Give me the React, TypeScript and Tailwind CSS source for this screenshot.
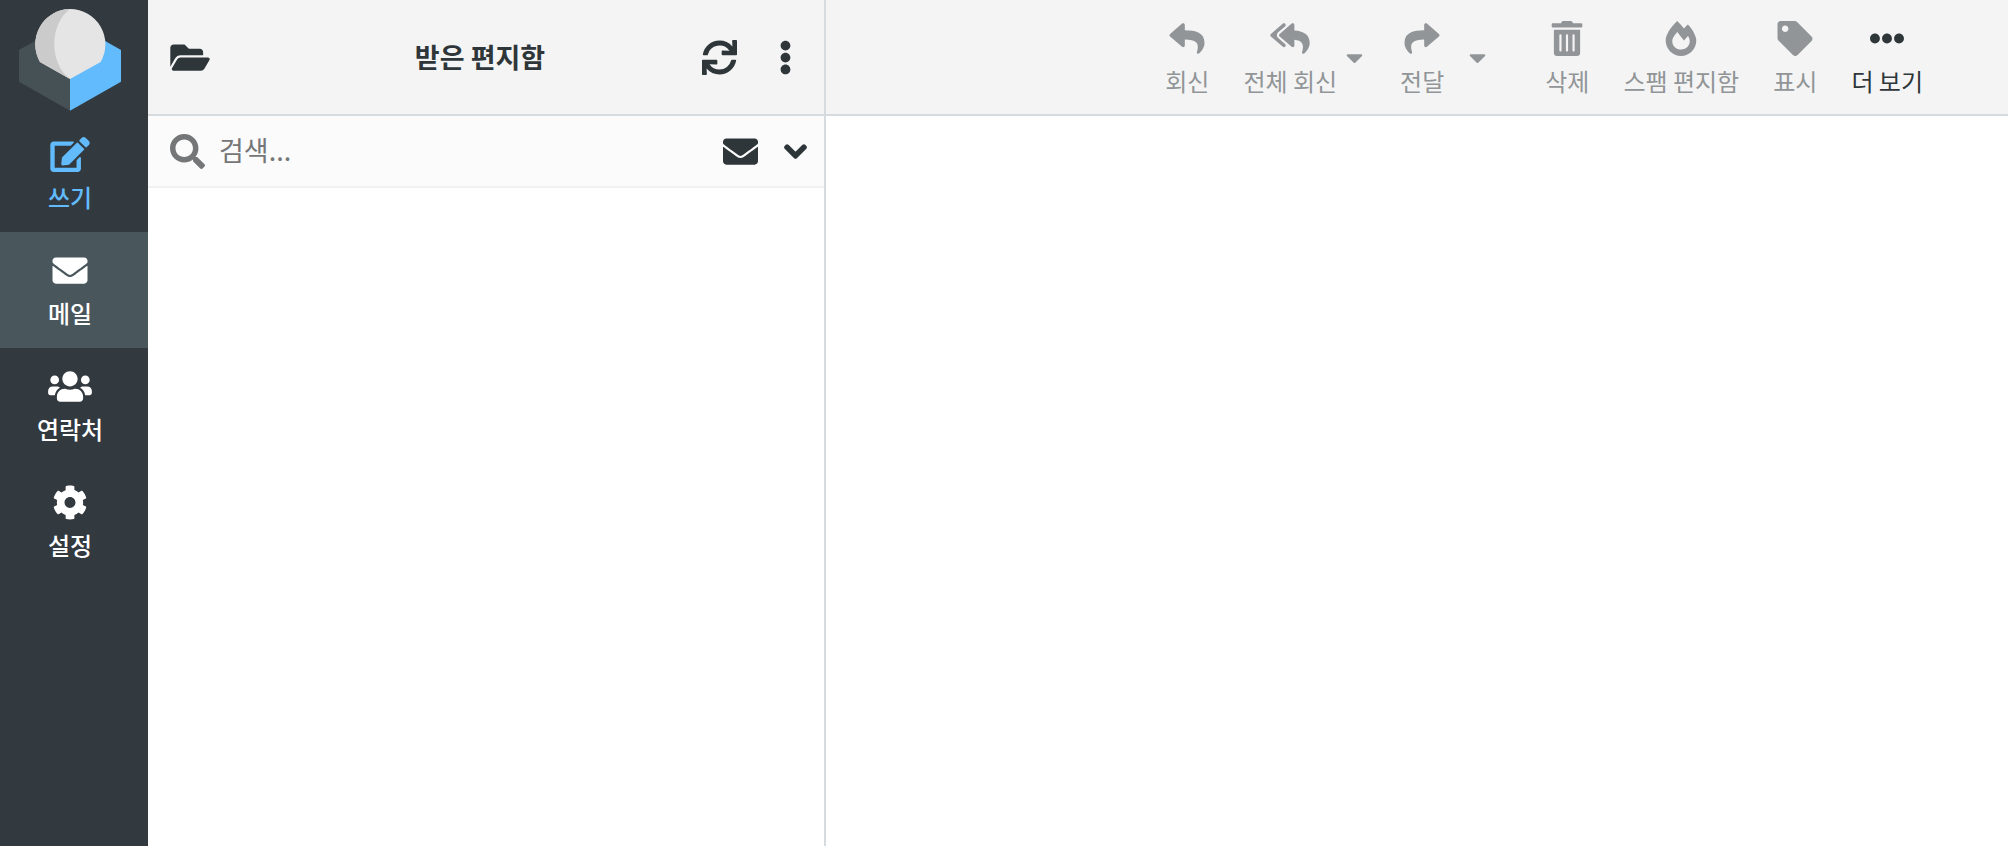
import type { ReactNode } from "react";
import type { IconType } from "react-icons";
import {
  FaCaretDown,
  FaChevronDown,
  FaCog,
  FaEdit,
  FaEllipsisH,
  FaEllipsisV,
  FaEnvelope,
  FaFireAlt,
  FaFolderOpen,
  FaReply,
  FaReplyAll,
  FaSearch,
  FaShare,
  FaSync,
  FaTag,
  FaTrashAlt,
  FaUsers,
} from "react-icons/fa";

const tasks = [
  { id: "compose", label: "쓰기", icon: FaEdit, tone: "text-[#62bbfc]" },
  {
    id: "mail",
    label: "메일",
    icon: FaEnvelope,
    tone: "bg-[#49565b] text-white",
  },
  { id: "contacts", label: "연락처", icon: FaUsers, tone: "text-white" },
  { id: "settings", label: "설정", icon: FaCog, tone: "text-white" },
];

function Logo() {
  return (
    <svg viewBox="57 27 306 306" className="h-[102px] w-[102px]" aria-hidden>
      <path d="M57 150L210 63V332L57 245Z" fill="#465155" />
      <path d="M363 150L210 63V332L363 245Z" fill="#62bbfc" />
      <path
        d="M210 27A106 106 0 0 0 120 186L210 237L302 186A106 106 0 0 0 210 27Z"
        fill="#e5e5e5"
      />
      <path
        d="M210 27A106 106 0 0 0 120 186L210 237C147 190 147 74 210 27Z"
        fill="#cbcbcb"
      />
    </svg>
  );
}

function TaskMenu() {
  return (
    <nav className="flex w-[148px] flex-none flex-col bg-[#32393f]">
      <div className="flex h-[116px] justify-center pr-2 pt-[9px]">
        <Logo />
      </div>
      {tasks.map(({ id, label, icon: Icon, tone }) => (
        <a
          key={id}
          href={`#${id}`}
          className={`flex flex-col items-center pb-5 pr-2 pt-[21px] ${tone}`}
        >
          <Icon className="h-[35px] w-11" />
          <span className="mt-[10px] text-[24px] font-medium leading-[30px]">
            {label}
          </span>
        </a>
      ))}
    </nav>
  );
}

function MessageList() {
  return (
    <section className="flex w-[678px] flex-none flex-col border-r-2 border-[#d5dbdf]">
      <header className="flex h-[116px] items-center border-b-2 border-[#d5dbdf] bg-[#f4f4f4] pl-[22px] pr-8">
        <button aria-label="폴더">
          <FaFolderOpen className="h-[35px] w-10" />
        </button>
        <h1 className="flex-1 pl-12 text-center text-[27px] font-bold leading-9">
          받은 편지함
        </h1>
        <button aria-label="새로고침">
          <FaSync className="h-[35px] w-[35px]" />
        </button>
        <button aria-label="메뉴" className="ml-[42px]">
          <FaEllipsisV className="h-[35px] w-[13px]" />
        </button>
      </header>

      <div className="flex h-[72px] items-center border-b-2 border-[#f1f1f1] bg-[#fbfbfb] pl-[22px] pr-[17px]">
        <label htmlFor="search" className="text-[#757677]">
          <FaSearch className="h-[35px] w-[35px]" />
        </label>
        <input
          id="search"
          type="text"
          placeholder="검색..."
          className="ml-[14px] min-w-0 flex-1 bg-transparent pb-0.5 text-[27px] leading-9 outline-none placeholder:text-[#757677]"
        />
        <button aria-label="읽지 않은 메일">
          <FaEnvelope className="h-[35px] w-[35px]" />
        </button>
        <button aria-label="검색 옵션" className="ml-[26px]">
          <FaChevronDown
            className="h-[25px] w-[23px]"
            stroke="currentColor"
            strokeWidth="32"
          />
        </button>
      </div>
    </section>
  );
}

function ToolButton({
  icon: Icon,
  children,
  active = false,
}: {
  icon: IconType;
  children: ReactNode;
  active?: boolean;
}) {
  return (
    <button
      disabled={!active}
      className={`flex flex-col items-center whitespace-nowrap px-[17px] pb-4 pt-[21px] ${
        active ? "text-[#2e363a]" : "text-[#919597]"
      }`}
    >
      <Icon className="h-[35px] w-10" />
      <span className="mt-[10px] text-[24px] leading-[30px]">{children}</span>
    </button>
  );
}

function MoreToggle({ label }: { label: string }) {
  return (
    <button disabled aria-label={label} className="text-[#919597]">
      <FaCaretDown className="h-[27px] w-[17px]" />
    </button>
  );
}

function Toolbar() {
  return (
    <header className="flex h-[116px] justify-end border-b-2 border-[#d5dbdf] bg-[#f4f4f4] pr-[68px]">
      <ToolButton icon={FaReply}>회신</ToolButton>
      <div className="mr-5 flex">
        <ToolButton icon={FaReplyAll}>전체 회신</ToolButton>
        <div className="-ml-2 flex items-center">
          <MoreToggle label="전체 회신 옵션" />
        </div>
      </div>
      <div className="mr-[42px] flex">
        <ToolButton icon={FaShare}>전달</ToolButton>
        <div className="ml-2 flex items-center">
          <MoreToggle label="전달 옵션" />
        </div>
      </div>
      <ToolButton icon={FaTrashAlt}>삭제</ToolButton>
      <ToolButton icon={FaFireAlt}>스팸 편지함</ToolButton>
      <ToolButton icon={FaTag}>표시</ToolButton>
      <ToolButton icon={FaEllipsisH} active>
        더 보기
      </ToolButton>
    </header>
  );
}

export default function App() {
  return (
    <div className="flex min-h-screen bg-white font-['Noto_Sans_CJK_KR',sans-serif] text-[#2e363a]">
      <TaskMenu />
      <MessageList />
      <main className="min-w-0 flex-1">
        <Toolbar />
      </main>
    </div>
  );
}
